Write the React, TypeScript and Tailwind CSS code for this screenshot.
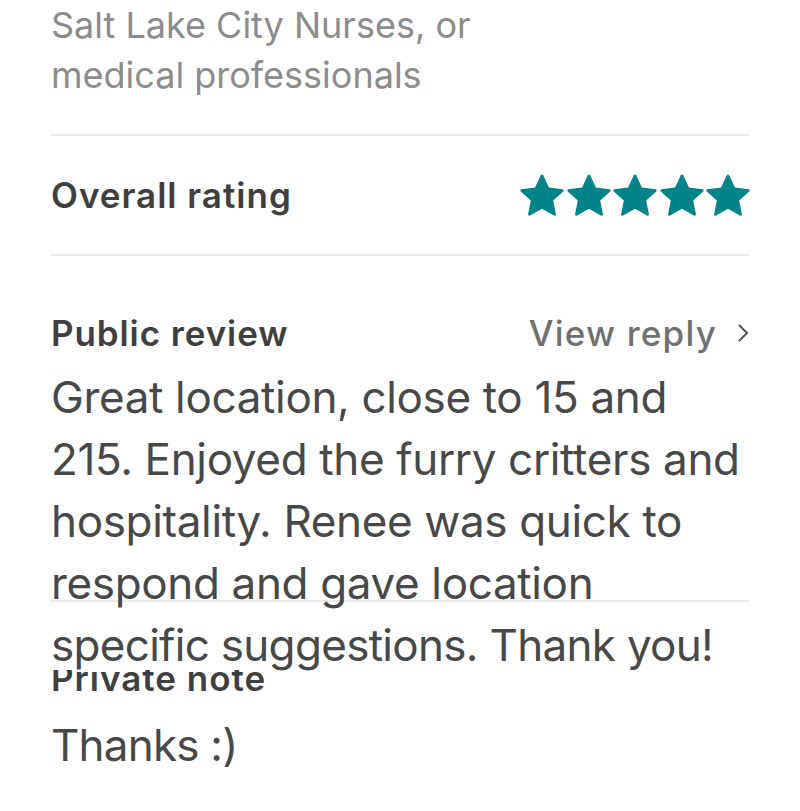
import React from "react";

const Star = () => (
  <svg viewBox="0 0 32 32" className="w-[44px] h-[44px]" fill="#008489" aria-hidden="true">
    <path d="M15.094 1.579l-4.124 8.885-9.86 1.27a1 1 0 0 0-.542 1.736l7.293 6.565-1.965 9.852a1 1 0 0 0 1.483 1.061L16 25.951l8.625 4.997a1 1 0 0 0 1.482-1.06l-1.965-9.853 7.293-6.565a1 1 0 0 0-.541-1.735l-9.86-1.271-4.127-8.885a1 1 0 0 0-1.814 0z" />
  </svg>
);

export default function App() {
  return (
    <div
      className="w-[800px] h-[811px] bg-white overflow-hidden px-[51px]"
      style={{ fontFamily: "Inter, 'Noto Sans', sans-serif" }}
    >
      <div className="text-[36px] leading-[50px] text-[#8c8c8c] pb-[34px]">
        Salt Lake City Nurses, or
        <br />
        medical professionals
      </div>
      <div className="border-t-2 border-[#ebebeb]" />
      <div className="flex items-center justify-between h-[118px]">
        <div className="text-[35px] leading-[40px] font-semibold tracking-[1px] text-[#3f3f3f]">Overall rating</div>
        <div className="flex items-center gap-[2.5px] -mr-[1px]">
          <Star />
          <Star />
          <Star />
          <Star />
          <Star />
        </div>
      </div>
      <div className="border-t-2 border-[#ebebeb]" />
      <div className="flex items-center justify-between mt-[57px] h-[40px]">
        <div className="text-[35px] leading-[40px] font-semibold tracking-[0.9px] text-[#3f3f3f]">Public review</div>
        <div className="flex items-center gap-[20px]">
          <span className="text-[35px] leading-[40px] font-medium tracking-[1.2px] text-[#717171]">View reply</span>
          <svg viewBox="0 0 12 20" className="w-[12px] h-[20px]" fill="none" stroke="#555" strokeWidth="2" aria-hidden="true">
            <polyline points="2,2 10,10 2,18" />
          </svg>
        </div>
      </div>
      <div className="h-[234px] mt-[13px]">
        <p className="text-[44px] leading-[62px] tracking-[-0.35px] text-[#484848]">
          <span className="block whitespace-nowrap">Great location, close to 15 and</span>
          <span className="block whitespace-nowrap">215. Enjoyed the furry critters and</span>
          <span className="block whitespace-nowrap">hospitality. Renee was quick to</span>
          <span className="block whitespace-nowrap">respond and gave location</span>
          <span className="block whitespace-nowrap tracking-[-0.7px]">specific suggestions. Thank you!</span>
        </p>
      </div>
      <div className="border-t-2 border-[#ebebeb]" />
      <div className="mt-[68px] h-[28px] overflow-hidden">
        <div className="-mt-[12px] text-[35px] leading-[40px] font-semibold tracking-[1px] text-[#3f3f3f]">Private note</div>
      </div>
      <div className="mt-[16px] text-[44px] leading-[62px] tracking-[-0.8px] text-[#484848]">Thanks :)</div>
    </div>
  );
}
